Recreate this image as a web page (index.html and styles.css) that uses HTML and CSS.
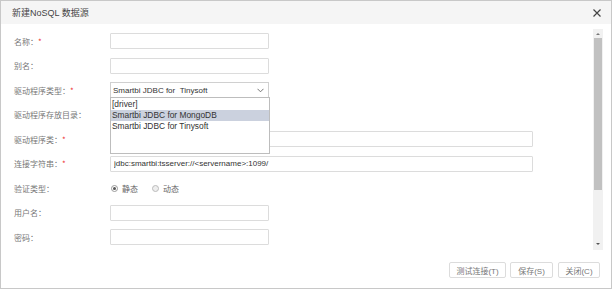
FILE: index.html
```html
<!DOCTYPE html>
<html lang="zh-CN">
<head>
    <meta charset="UTF-8">
    <title>新建NoSQL 数据源</title>
    <link rel="stylesheet" href="styles.css">
</head>
<body>
    <div class="dialog">
        <div class="dialog-header">
            <span class="dialog-title">新建NoSQL 数据源</span>
            <svg class="close-icon" width="8" height="8" viewBox="0 0 8 8">
                <path d="M0.5 0.5 L7.5 7.5 M7.5 0.5 L0.5 7.5" stroke="#444" stroke-width="1.2"/>
            </svg>
        </div>

        <div class="dialog-body">
            <div class="form">
                <label class="form-label">名称：<span class="req">*</span></label>
                <div class="form-field"><input class="text-input short" type="text"></div>

                <label class="form-label">别名：</label>
                <div class="form-field"><input class="text-input short" type="text"></div>

                <label class="form-label">驱动程序类型：<span class="req">*</span></label>
                <div class="form-field">
                    <div class="select short">
                        <span>Smartbi JDBC for &nbsp;Tinysoft</span>
                        <svg class="chevron" width="7" height="5" viewBox="0 0 7 5">
                            <path d="M0.5 0.8 L3.5 3.8 L6.5 0.8" fill="none" stroke="#666" stroke-width="0.9"/>
                        </svg>
                        <ul class="dropdown">
                            <li>[driver]</li>
                            <li class="active">Smartbi JDBC for MongoDB</li>
                            <li>Smartbi JDBC for Tinysoft</li>
                        </ul>
                    </div>
                </div>

                <label class="form-label">驱动程序存放目录：</label>
                <div class="form-field"></div>

                <label class="form-label">驱动程序类：<span class="req">*</span></label>
                <div class="form-field"><input class="text-input long" type="text"></div>

                <label class="form-label">连接字符串：<span class="req">*</span></label>
                <div class="form-field"><input class="text-input long" type="text" value="jdbc:smartbi:tsserver://&lt;servername&gt;:1099/"></div>

                <label class="form-label">验证类型：</label>
                <div class="form-field radios">
                    <span class="radio checked"></span><span class="radio-text">静态</span>
                    <span class="radio"></span><span class="radio-text">动态</span>
                </div>

                <label class="form-label">用户名：</label>
                <div class="form-field"><input class="text-input short" type="text"></div>

                <label class="form-label">密码：</label>
                <div class="form-field"><input class="text-input short" type="text"></div>
            </div>

            <div class="scrollbar">
                <span class="arrow up"></span>
                <div class="thumb"></div>
                <span class="arrow down"></span>
            </div>
        </div>

        <div class="dialog-footer">
            <button class="btn btn-test">测试连接(T)</button>
            <button class="btn btn-save">保存(S)</button>
            <button class="btn btn-close">关闭(C)</button>
        </div>
    </div>
</body>
</html>
```

FILE: styles.css
```css
body {
    margin: 0;
    background: #fff;
    font-family: "Liberation Sans", "Noto Sans CJK SC", sans-serif;
    font-size: 8px;
    color: #555;
}
.dialog {
    width: 612px;
    height: 289px;
    box-sizing: border-box;
    border: 1px solid #c8c8c8;
    display: flex;
    flex-direction: column;
    background: #fff;
}
.dialog-header {
    height: 23px;
    flex: none;
    display: flex;
    align-items: center;
    justify-content: space-between;
    padding: 0 10px 0 11px;
    background: #f5f5f5;
}
.dialog-title {
    font-size: 9px;
    color: #444;
}
.close-icon {
    display: block;
}
.dialog-body {
    height: 228px;
    flex: none;
    display: flex;
}
.form {
    flex: 1;
    display: grid;
    grid-template-columns: 96px 1fr;
    grid-auto-rows: 24.5px;
    padding: 4.8px 0 0 13px;
}
.form-label {
    display: flex;
    align-items: center;
    color: #777;
    font-family: "Noto Sans CJK SC", sans-serif;
}
.req {
    color: #e33;
}
.form-field {
    display: flex;
    align-items: center;
}
.text-input {
    height: 16px;
    box-sizing: border-box;
    border: 1px solid #dcdcdc;
    border-radius: 1px;
    padding: 0 3px;
    font-family: "Liberation Sans", sans-serif;
    font-size: 8px;
    color: #333;
    outline: none;
}
.short {
    width: 159px;
}
.long {
    width: 423px;
}
.select {
    position: relative;
    height: 16px;
    box-sizing: border-box;
    border: 1px solid #d0d0d0;
    display: flex;
    align-items: center;
    justify-content: space-between;
    padding: 0 4px 0 2px;
    color: #333;
}
.dropdown {
    position: absolute;
    left: -1px;
    top: 14px;
    width: 160px;
    height: 57px;
    box-sizing: border-box;
    margin: 0;
    padding: 1px 0 0;
    list-style: none;
    border: 1px solid #bdbdbd;
    background: #fff;
    z-index: 2;
}
.dropdown li {
    height: 11px;
    line-height: 11px;
    padding-left: 1px;
    font-size: 8.4px;
    color: #333;
}
.dropdown li.active {
    background: #cbd1de;
}
.radio {
    width: 7px;
    height: 7px;
    box-sizing: border-box;
    border-radius: 50%;
    border: 1px solid #bbb;
    background: #eee;
    margin-left: 1px;
    position: relative;
}
.radio.checked {
    background: #fff;
    border-color: #999;
}
.radio.checked::after {
    content: "";
    position: absolute;
    left: 1px;
    top: 1px;
    width: 3px;
    height: 3px;
    border-radius: 50%;
    background: #555;
}
.radio-text {
    margin: 0 13px 0 4px;
    font-family: "Noto Sans CJK SC", sans-serif;
    color: #666;
}
.scrollbar {
    width: 10px;
    margin: 5px 8px 2px 0;
    background: #f1f1f1;
    display: flex;
    flex-direction: column;
    align-items: center;
}
.arrow {
    width: 0;
    height: 0;
    border-left: 2px solid transparent;
    border-right: 2px solid transparent;
    margin: 4px 0 3px;
}
.arrow.up {
    border-bottom: 2px solid #777;
}
.arrow.down {
    border-top: 2px solid #555;
    margin-top: auto;
    margin-bottom: 5px;
}
.thumb {
    width: 8px;
    height: 152px;
    background: #c1c1c1;
}
.dialog-footer {
    flex: 1;
    display: flex;
    justify-content: flex-end;
    align-items: flex-start;
    padding: 10px 11px 0 0;
}
.btn {
    height: 16px;
    box-sizing: border-box;
    border: 1px solid #dcdcdc;
    border-radius: 2px;
    background: #fff;
    color: #777;
    font-family: "Liberation Sans", "Noto Sans CJK SC", sans-serif;
    font-size: 8px;
    padding: 0;
    margin-left: 4px;
}
.btn-test {
    width: 57px;
}
.btn-save {
    width: 43px;
}
.btn-close {
    width: 42px;
    margin-left: 5px;
}
```
